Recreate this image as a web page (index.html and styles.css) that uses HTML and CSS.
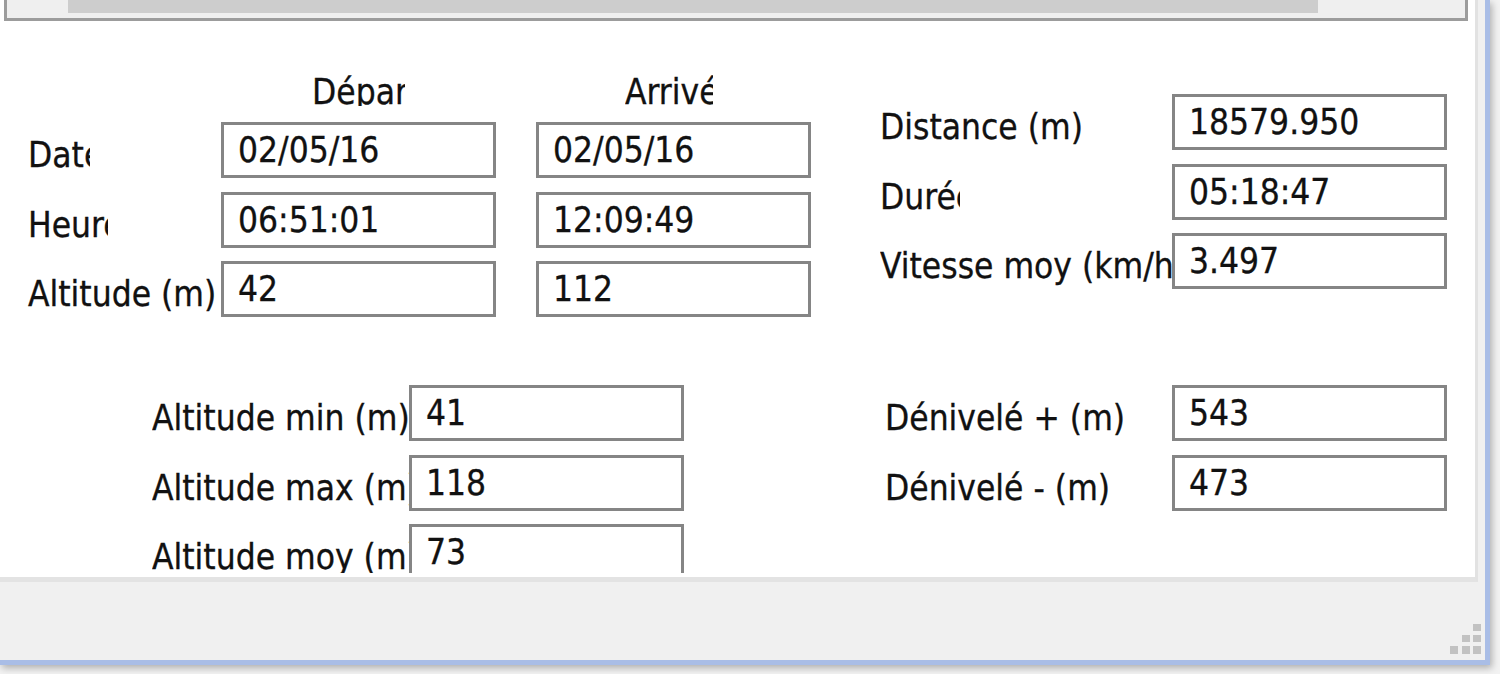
FILE: index.html
```html
<!DOCTYPE html>
<html lang="fr">
<head>
<meta charset="utf-8">
<title>Propriétés de la trace</title>
<link rel="stylesheet" href="styles.css">
</head>
<body>
<div class="window">
  <div class="panel">
    <div class="viewport">
      <div class="hscroll"><div class="thumb"></div></div>

      <div class="section top">
        <div class="grid grid-left">
          <div class="colhead c2"><span>Départ</span></div>
          <div class="colhead c3"><span>Arrivée</span></div>

          <div class="label w-date">Date</div>
          <div class="field">02/05/16</div>
          <div class="field">02/05/16</div>

          <div class="label w-heure">Heure</div>
          <div class="field">06:51:01</div>
          <div class="field">12:09:49</div>

          <div class="label">Altitude (m)</div>
          <div class="field">42</div>
          <div class="field">112</div>
        </div>

        <div class="grid grid-right">
          <div class="label">Distance (m)</div>
          <div class="field">18579.950</div>
          <div class="label w-duree">Durée</div>
          <div class="field">05:18:47</div>
          <div class="label">Vitesse moy (km/h)</div>
          <div class="field">3.497</div>
        </div>
      </div>

      <div class="section bottom">
        <div class="grid grid-alt">
          <div class="label">Altitude min (m)</div>
          <div class="field">41</div>
          <div class="label">Altitude max (m)</div>
          <div class="field">118</div>
          <div class="label">Altitude moy (m)</div>
          <div class="field">73</div>
        </div>
        <div class="grid grid-deniv">
          <div class="label">Dénivelé + (m)</div>
          <div class="field">543</div>
          <div class="label">Dénivelé - (m)</div>
          <div class="field">473</div>
        </div>
      </div>
    </div>
  </div>
  <div class="status">
    <svg class="grip" width="32" height="31" viewBox="0 0 32 31" aria-hidden="true">
      <rect x="23" y="0" width="8" height="7" fill="#c2c2c2"/>
      <rect x="12" y="11" width="8" height="7" fill="#c2c2c2"/>
      <rect x="23" y="11" width="8" height="7" fill="#c2c2c2"/>
      <rect x="0" y="22" width="8" height="8" fill="#c2c2c2"/>
      <rect x="12" y="22" width="8" height="8" fill="#c2c2c2"/>
      <rect x="23" y="22" width="8" height="8" fill="#c2c2c2"/>
    </svg>
  </div>
</div>
</body>
</html>
```

FILE: styles.css
```css
html, body {
  margin: 0;
  padding: 0;
}
body {
  background: #f2f2f2;
  width: 1500px;
  height: 674px;
  overflow: hidden;
  font-family: "DejaVu Sans Condensed", "DejaVu Sans", sans-serif;
  font-size: 35px;
  color: #111111;
  -webkit-text-stroke: 0.3px #111111;
}

.window {
  width: 1485px;
  height: 660px;
  background: #f0f0f0;
  border-right: 5px solid #a9bde6;
  border-bottom: 5px solid #a9bde6;
  display: flex;
  flex-direction: column;
  box-shadow: 2px 3px 7px rgba(0, 0, 0, 0.28);
}

.panel {
  width: 1475px;
  height: 577px;
  background: #ffffff;
  border-right: 3px solid #e2e2e2;
  border-bottom: 5px solid #e3e3e3;
  flex: none;
}

.viewport {
  height: 573px;
  overflow: hidden;
}

.hscroll {
  margin-left: 4px;
  width: 1458px;
  height: 18px;
  background: #efefef;
  border: 3px solid #9c9c9c;
  border-top: none;
}
.thumb {
  margin-left: 61px;
  width: 1250px;
  height: 13px;
  background: #cdcdcd;
}

.section {
  display: flex;
  align-items: flex-start;
}
.section.top {
  margin-top: 51px;
}
.section.bottom {
  margin-top: 68px;
}

.grid {
  display: grid;
  row-gap: 13.5px;
}
.grid-left {
  margin-left: 28px;
  grid-template-columns: 153px 275px 275px;
  grid-template-rows: 36.5px 56px 56px 56px;
  column-gap: 40px;
}
.grid-right {
  margin-left: 69px;
  margin-top: 22px;
  grid-template-columns: 292px 275px;
  grid-auto-rows: 56px;
}
.grid-alt {
  margin-left: 152px;
  grid-template-columns: 257px 275px;
  grid-auto-rows: 56px;
}
.grid-deniv {
  margin-left: 201px;
  grid-template-columns: 287px 275px;
  grid-auto-rows: 56px;
}

.colhead {
  align-self: start;
}
.colhead.c2 {
  grid-column: 2;
  padding-left: 91px;
}
.colhead.c3 {
  grid-column: 3;
  padding-left: 89px;
}
.colhead span {
  display: block;
  width: 93px;
  height: 34px;
  line-height: 40px;
  overflow: hidden;
  white-space: nowrap;
}
.colhead.c3 span {
  width: 88px;
}

.label {
  height: 56px;
  box-sizing: border-box;
  padding-top: 10px;
  line-height: 46px;
  white-space: nowrap;
  overflow: hidden;
}
.grid-left .label {
  overflow: visible;
}
.grid-left .label.w-date {
  width: 62px;
  overflow: hidden;
}
.grid-left .label.w-heure {
  width: 80px;
  overflow: hidden;
}
.label.w-duree {
  width: 80px;
}

.field {
  height: 56px;
  box-sizing: border-box;
  border: 3px solid #858585;
  background: #ffffff;
  padding-left: 14px;
  line-height: 50px;
  white-space: nowrap;
  overflow: hidden;
}

.status {
  flex: 1;
  position: relative;
}
.grip {
  position: absolute;
  right: 3px;
  bottom: 5px;
  display: block;
}
```
